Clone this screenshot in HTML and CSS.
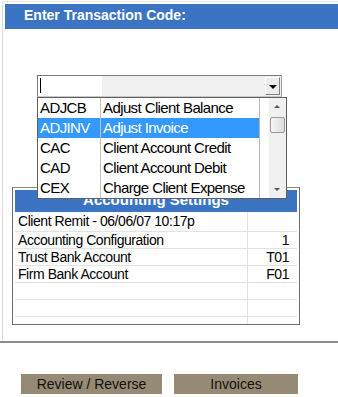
FILE: index.html
```html
<!DOCTYPE html>
<html lang="en">
<head>
<meta charset="UTF-8">
<meta name="viewport" content="width=device-width, initial-scale=1.0">
<title>Enter Transaction Code</title>
<link rel="stylesheet" href="styles.css">
</head>
<body>

<div class="panel">
    <div class="panel-title">Enter Transaction Code:</div>

    <div class="combo">
        <div class="combo-input"><span class="caret"></span></div>
        <div class="combo-fill"></div>
        <div class="combo-button"><span class="arrow-down"></span></div>

        <div class="dropdown">
            <div class="dropdown-rows">
                <div class="row"><span class="code">ADJCB</span><span class="desc">Adjust Client Balance</span></div>
                <div class="row selected"><span class="code">ADJINV</span><span class="desc">Adjust Invoice</span></div>
                <div class="row"><span class="code">CAC</span><span class="desc">Client Account Credit</span></div>
                <div class="row"><span class="code">CAD</span><span class="desc">Client Account Debit</span></div>
                <div class="row"><span class="code">CEX</span><span class="desc">Charge Client Expense</span></div>
            </div>
            <div class="scrollbar">
                <span class="scroll-up"></span>
                <span class="scroll-thumb"></span>
                <span class="scroll-down"></span>
            </div>
        </div>
    </div>

    <div class="settings">
        <div class="settings-title">Accounting Settings</div>
        <table class="settings-table">
            <tr class="first"><td>Client Remit - 06/06/07 10:17p</td><td class="val"></td></tr>
            <tr><td>Accounting Configuration</td><td class="val">1</td></tr>
            <tr><td>Trust Bank Account</td><td class="val">T01</td></tr>
            <tr><td>Firm Bank Account</td><td class="val">F01</td></tr>
            <tr><td></td><td class="val"></td></tr>
            <tr><td></td><td class="val"></td></tr>
            <tr><td></td><td class="val"></td></tr>
        </table>
    </div>
</div>

<div class="divider"></div>

<div class="actions">
    <button type="button" class="btn btn-review">Review / Reverse</button>
    <button type="button" class="btn btn-invoices">Invoices</button>
</div>

</body>
</html>
```

FILE: styles.css
```css
body {
    font-family: "Liberation Sans", Arial, sans-serif;
    background-color: #fff;
    margin: 0;
    padding: 0;
    color: #000;
}

.panel {
    margin: 1px 0 0 2px;
    border-left: 1px solid #d9d9d9;
    border-top: 1px solid #e4e4e4;
    padding: 2px 0 16px 2px;
}

.panel-title {
    background-color: #3b74c3;
    color: #fff;
    font-weight: bold;
    font-size: 14px;
    height: 25px;
    line-height: 23px;
    padding-left: 19px;
}

/* combo box */
.combo {
    position: relative;
    display: flex;
    margin: 46px 0 0 32px;
    width: 245px;
    height: 22px;
    box-sizing: border-box;
    border: 1px solid #7a7a7a;
    border-right-color: #a0a0a0;
    border-bottom-color: #c8c8c8;
    background-color: #f0f0f0;
}

.combo-input {
    width: 64px;
    background-color: #fff;
    position: relative;
}

.caret {
    position: absolute;
    left: 2px;
    top: 2px;
    width: 1px;
    height: 15px;
    background-color: #000;
}

.combo-fill {
    flex: 1;
}

.combo-button {
    width: 15px;
    margin: 1px 1px 1px 0;
    box-sizing: border-box;
    border: 1px solid #fff;
    border-right-color: #808080;
    border-bottom-color: #808080;
    background-color: #ececec;
    display: flex;
    align-items: center;
    justify-content: center;
}

.arrow-down {
    width: 0;
    height: 0;
    border-left: 4px solid transparent;
    border-right: 4px solid transparent;
    border-top: 4px solid #000;
    margin-top: 1px;
}

/* drop-down list */
.dropdown {
    position: absolute;
    top: 21px;
    left: -1px;
    width: 250px;
    height: 102px;
    box-sizing: border-box;
    border: 1px solid #5f5f5f;
    background-color: #fff;
    display: flex;
    z-index: 2;
}

.dropdown-rows {
    width: 222px;
    border-right: 1px solid #b8b8b8;
}

.row {
    display: flex;
    height: 20px;
    line-height: 20px;
    font-size: 15px;
    letter-spacing: -0.6px;
}

.row .code {
    width: 60px;
    padding-left: 2px;
    border-right: 1px solid #c4c4c4;
}

.row .desc {
    padding-left: 2px;
    white-space: nowrap;
}

.row.selected {
    background-color: #3399ff;
    color: #fff;
}

.scrollbar {
    margin-left: 9px;
    width: 17px;
    background-color: #f0f0f0;
    position: relative;
}

.scroll-up, .scroll-down {
    position: absolute;
    left: 5px;
    width: 0;
    height: 0;
    border-left: 3px solid transparent;
    border-right: 3px solid transparent;
}

.scroll-up {
    top: 7px;
    border-bottom: 3px solid #555;
}

.scroll-down {
    bottom: 7px;
    border-top: 3px solid #555;
}

.scroll-thumb {
    position: absolute;
    top: 19px;
    left: 1px;
    width: 15px;
    height: 16px;
    box-sizing: border-box;
    border: 1px solid #9a9a9a;
    border-radius: 2px;
    background: linear-gradient(to right, #f6f6f6, #dcdcdc);
}

/* accounting settings */
.settings {
    margin: 90px 0 0 7px;
    width: 288px;
    height: 138px;
    box-sizing: border-box;
    border: 1px solid #6e6e6e;
    border-top-color: #8a8a8a;
    padding: 2px;
    overflow: hidden;
}

.settings-title {
    background-color: #3b74c3;
    color: #fff;
    font-weight: bold;
    font-size: 15px;
    text-align: center;
    height: 22px;
    line-height: 20px;
}

.settings-table {
    width: 100%;
    border-collapse: collapse;
    font-size: 14px;
    letter-spacing: -0.45px;
}

.settings-table td {
    height: 16px;
    padding: 0 0 0 3px;
    line-height: 16px;
    border-bottom: 1px solid #e2e2e2;
    white-space: nowrap;
}

.settings-table tr.first td {
    height: 19px;
    line-height: 19px;
}

.settings-table td.val {
    width: 38px;
    text-align: right;
    padding-right: 8px;
    border-left: 1px solid #e2e2e2;
}

.divider {
    border-top: 2px solid #8c8c8c;
}

.actions {
    display: flex;
    gap: 12px;
    padding: 31px 0 0 21px;
}

.btn {
    height: 20px;
    border: none;
    border-radius: 0;
    background-color: #968a74;
    color: #111;
    font-family: "Liberation Sans", Arial, sans-serif;
    font-size: 14px;
    padding: 0;
    cursor: pointer;
}

.btn-review {
    width: 141px;
}

.btn-invoices {
    width: 124px;
}
```
